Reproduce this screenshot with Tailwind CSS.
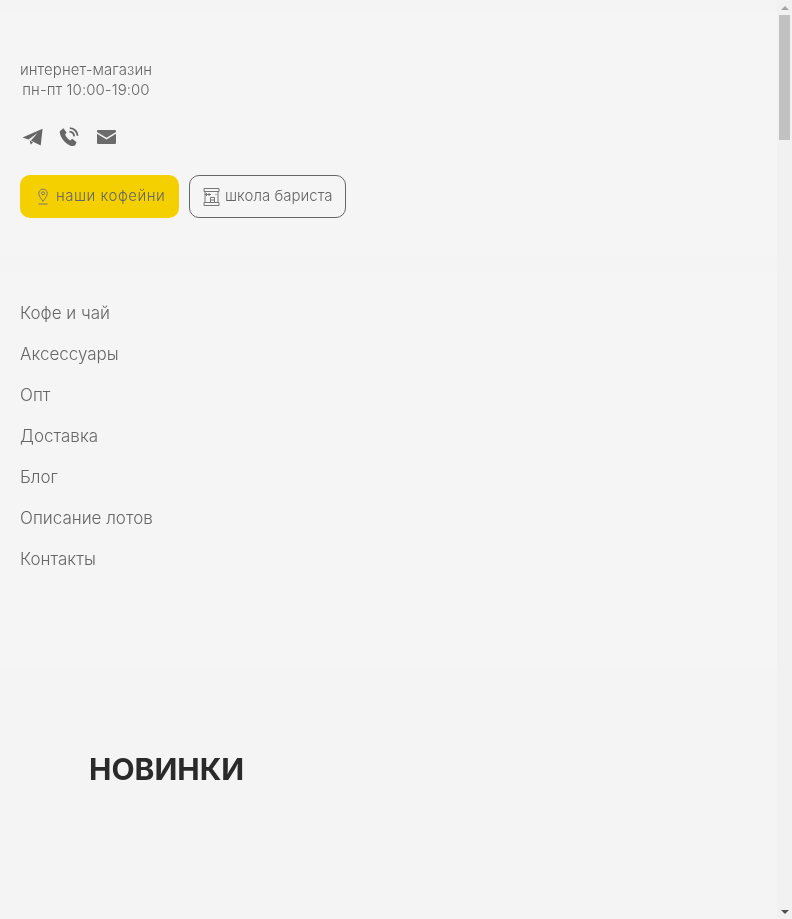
<!DOCTYPE html>
<html lang="ru">

<head>
    <meta charset="UTF-8">
    <meta name="viewport" content="width=device-width, initial-scale=1.0">
    <title>Новинки</title>
    <script src="https://cdn.jsdelivr.net/npm/@tailwindcss/browser@4"></script>
</head>

<body class="bg-[#f5f5f5] font-['Inter',sans-serif] text-[#666] h-[919px] overflow-hidden flex">
    <main class="flex-1 min-w-0 flex flex-col will-change-transform">
        <div class="h-[14px] bg-[#f4f4f4]"></div>
        <header class="h-[243px] pt-[46px] px-5 flex flex-col">
            <div class="w-[132px] text-center text-[15px] leading-[20px] tracking-[0.06px] font-light">
                <p class="whitespace-nowrap">интернет-магазин</p>
                <p class="whitespace-nowrap">пн-пт 10:00-19:00</p>
            </div>

            <div class="flex items-center mt-[27px] ml-[2px] h-5">
                <svg class="w-[21px] h-[18px]" viewBox="0 0 21 18" fill="#666">
                    <path d="M0.5 9.6 20.6 0.8 18.7 17.6 11.6 14 9 12.6 15.6 5 6.5 11.6Z" />
                    <path d="M7.5 12.2 11 14.4 8.8 16.600Z" />
                </svg>
                <svg class="w-[20px] h-[20px] ml-[16px]" viewBox="0 0 20 20" fill="none">
                    <path d="M4.4 1.2 7.600 5.600 6.200 7.600C6.800 9.800 9 12.400 11.200 13.400l2-1.600 4.400 3.400-1.600 3.400C14 19.800 10 18.800 6.400 15.400 2.600 11.600 0.400 7 0.800 4.200Z" fill="#666" />
                    <path d="M10.400 4.600c2.600.2 4.600 2.200 4.800 4.800M10.800 1.200c4.400.2 7.600 3.400 7.800 7.600" stroke="#666" stroke-width="1.800" />
                </svg>
                <svg class="w-[19px] h-[14px] ml-[18px]" viewBox="0 0 19 14">
                    <path d="M1 0h17A1 1 0 0 1 19 1V2L9.500 7.800 0 2V1A1 1 0 0 1 1 0Z" fill="#6b6b6b" />
                    <path d="M0 3.800 9.500 9.600 19 3.800V13a1 1 0 0 1-1 1H1a1 1 0 0 1-1-1Z" fill="#6b6b6b" />
                </svg>
            </div>

            <div class="flex gap-[10px] mt-[28px]">
                <a class="h-[43px] w-[159px] rounded-[10px] bg-[#f4d000] flex items-center pl-[16px] gap-[6px] text-[15px] tracking-[0.5px] font-light whitespace-nowrap">
                    <svg class="w-[14px] h-[17px]" viewBox="0 0 14 17" fill="none" stroke="#777" stroke-width="1">
                        <path d="M7 13.300C5 10.500 2.800 8 2.800 5.300a4.200 4.200 0 0 1 8.400 0C11.200 8 9 10.500 7 13.300Z" />
                        <circle cx="7" cy="5.300" r="1.500" />
                        <path d="M2.500 16h9" />
                    </svg>
                    наши кофейни
                </a>
                <a class="h-[43px] w-[157px] rounded-[10px] border border-[#666] flex items-center pl-[13px] gap-[5px] text-[15px] font-light whitespace-nowrap">
                    <svg class="w-[17px] h-[18px]" viewBox="0 0 17 18" fill="none" stroke="#777" stroke-width="1">
                        <path d="M1 .5h15v3H1ZM2 3.500v11M15 3.500v11M1 14.500h15v3H1Z" />
                        <path d="M2 6.500h6M3.500 5v3M6 5v3M7.500 14.500v-5h4v5M7.500 12h4M12.500 6.500h1" />
                    </svg>
                    школа бариста
                </a>
            </div>
        </header>

        <div class="h-[15px] bg-[#f4f4f4]"></div>

        <nav class="flex flex-col gap-[16px] pt-[29px] pb-[96px] px-5 text-[17px] leading-[25px] font-light">
            <a>Кофе и чай</a>
            <a>Аксессуары</a>
            <a>Опт</a>
            <a>Доставка</a>
            <a>Блог</a>
            <a>Описание лотов</a>
            <a>Контакты</a>
        </nav>

        <section class="flex-1 bg-[#f4f4f4] pt-[81px] pl-[89px]">
            <h2 class="text-[30px] leading-[40px] font-bold text-[#2a2a2a]">НОВИНКИ</h2>
        </section>
    </main>

    <aside class="w-[15px] shrink-0 bg-[#f1f1f1] flex flex-col items-center">
        <div class="h-[15px] flex items-center justify-center">
            <div class="w-0 h-0 border-x-[4px] border-x-transparent border-b-[4px] border-b-[#a3a3a3]"></div>
        </div>
        <div class="w-[11px] h-[125px] bg-[#c1c1c1]"></div>
        <div class="flex-1"></div>
        <div class="h-[15px] flex items-center justify-center">
            <div class="w-0 h-0 border-x-[4px] border-x-transparent border-t-[4px] border-t-[#505050]"></div>
        </div>
    </aside>
</body>

</html>
